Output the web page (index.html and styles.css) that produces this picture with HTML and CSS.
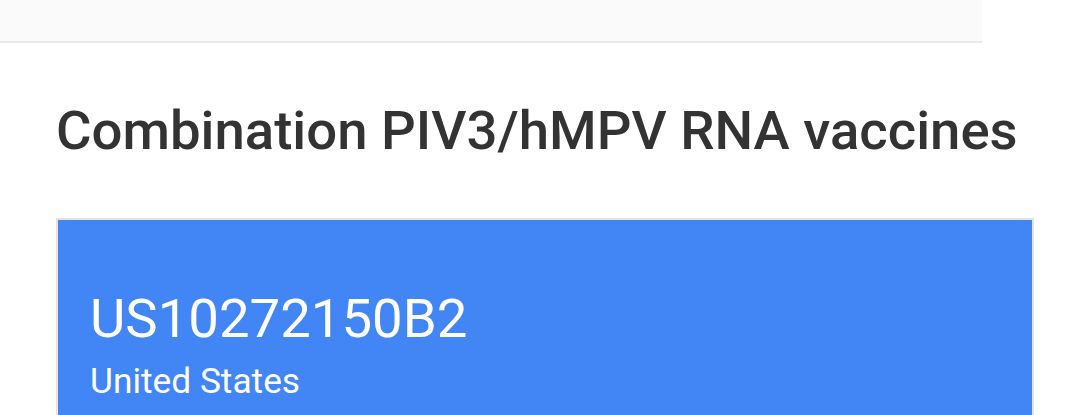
FILE: index.html
```html
<!DOCTYPE html>
<html lang="en">
<head>
    <meta charset="UTF-8">
    <meta name="viewport" content="width=device-width, initial-scale=1.0">
    <title>Combination PIV3/hMPV RNA vaccines</title>
    <link rel="stylesheet" href="styles.css">
</head>
<body>
    <div class="topbar"></div>
    <main class="content">
        <h1 class="title">Combination PIV3/hMPV RNA vaccines</h1>
        <div class="patent-card">
            <div class="patent-number">US10272150B2</div>
            <div class="patent-country">United States</div>
        </div>
    </main>
</body>
</html>
```

FILE: styles.css
```css
body {
    margin: 0;
    font-family: Roboto, "Noto Sans", Arial, sans-serif;
    background-color: #ffffff;
    color: #333;
}
.topbar {
    width: 982px;
    height: 41px;
    background-color: #fafafa;
    border-bottom: 2px solid #e8e8e8;
}
.content {
    padding: 0 46px 0 56px;
}
.title {
    margin: 0;
    padding-top: 56px;
    font-size: 54.5px;
    font-weight: 500;
    line-height: 62px;
    color: #333;
}
.patent-card {
    margin-top: 57px;
    background-color: #4285f4;
    border: 2px solid #e3e3e3;
    border-bottom: none;
    padding: 66px 32px 40px;
    color: #fff;
}
.patent-number {
    font-size: 54.5px;
    font-weight: 400;
    line-height: 64px;
}
.patent-country {
    margin-top: 11px;
    font-size: 35.3px;
    line-height: 40px;
}
```
